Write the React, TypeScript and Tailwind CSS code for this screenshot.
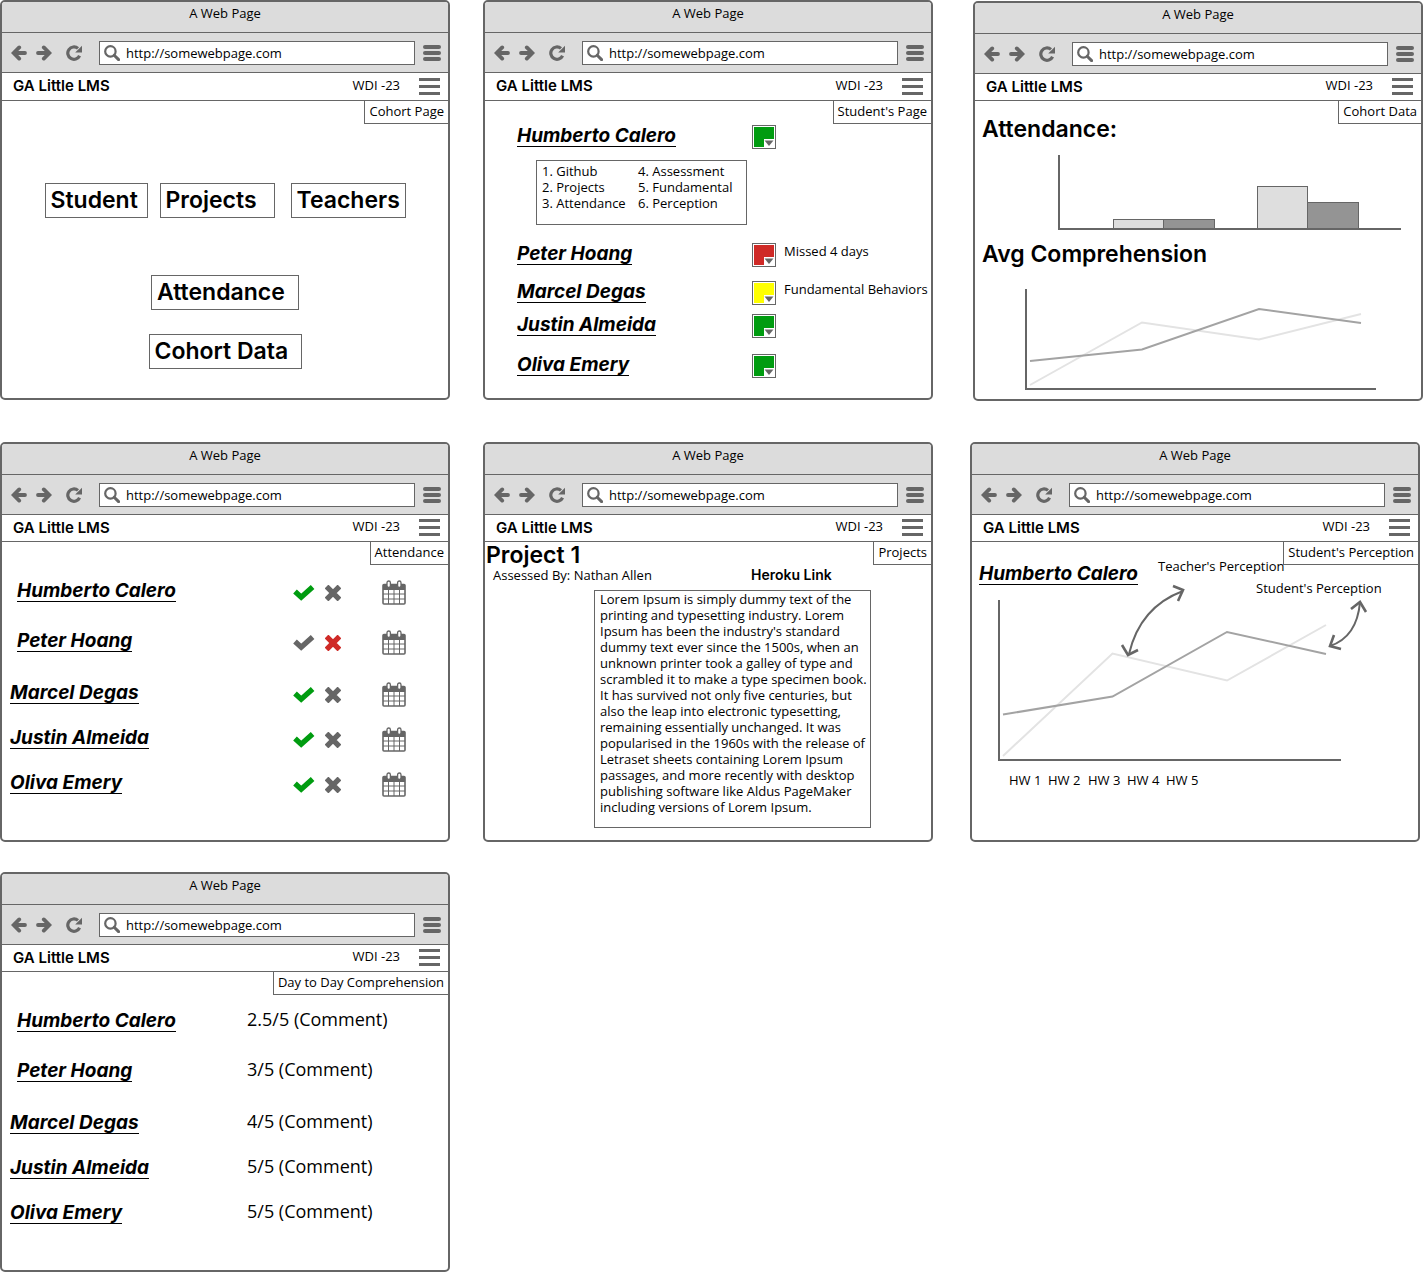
import React from "react";

const LINES = [
  "Lorem Ipsum is simply dummy text of the",
  "printing and typesetting industry. Lorem",
  "Ipsum has been the industry's standard",
  "dummy text ever since the 1500s, when an",
  "unknown printer took a galley of type and",
  "scrambled it to make a type specimen book.",
  "It has survived not only five centuries, but",
  "also the leap into electronic typesetting,",
  "remaining essentially unchanged. It was",
  "popularised in the 1960s with the release of",
  "Letraset sheets containing Lorem Ipsum",
  "passages, and more recently with desktop",
  "publishing software like Aldus PageMaker",
  "including versions of Lorem Ipsum.",
].join("\n");

function ArrowIcon({ className = "" }: { className?: string }) {
  return (
    <svg viewBox="0 0 16 16" className={`size-4 ${className}`} fill="none" stroke="currentColor" strokeWidth="3.8" strokeLinecap="round" aria-hidden="true">
      <path d="M14 8H4M8.200 2.400 2.600 8l5.600 5.600" strokeLinejoin="miter" />
    </svg>
  );
}

function ReloadIcon() {
  return (
    <svg viewBox="0 0 16 16" className="size-4" aria-hidden="true">
      <path d="M13.600 10.800A6.200 6.200 0 1 1 12 3.400" fill="none" stroke="currentColor" strokeWidth="3.200" />
      <path d="M16 0.800v6.800H9.200z" fill="currentColor" />
    </svg>
  );
}

function SearchIcon() {
  return (
    <svg viewBox="0 0 16 16" className="size-4 shrink-0 text-[#666]" fill="none" stroke="currentColor" aria-hidden="true">
      <circle cx="6.4" cy="6.4" r="5.2" strokeWidth="2.2" />
      <path d="m10.2 10.2 4.4 4.4" strokeWidth="3" strokeLinecap="round" />
    </svg>
  );
}

function CheckIcon() {
  return (
    <svg viewBox="0 0 22 16" className="h-4 w-[22px]" fill="none" stroke="currentColor" strokeWidth="5.400" aria-hidden="true">
      <path d="m2 6.600 6.200 5.600L19.600 2" />
    </svg>
  );
}

function CrossIcon() {
  return (
    <svg viewBox="0 0 16 16" className="size-4" fill="none" stroke="currentColor" strokeWidth="5.400" aria-hidden="true">
      <path d="m1.500 1.500 13 13M14.500 1.500l-13 13" />
    </svg>
  );
}

function CalendarIcon() {
  return (
    <svg viewBox="0 0 24 26" className="h-[26px] w-6" fill="none" stroke="currentColor" aria-hidden="true">
      <path d="M1 4.5h22V10H1z" fill="currentColor" stroke="none" />
      <rect x="1" y="4.5" width="22" height="19.5" rx="1" strokeWidth="1.6" />
      <path d="M6.5 10v14M12 10v14M17.500 10v14M1 14h22M1 19h22" strokeWidth="1" />
      <rect x="5" y="1" width="3.400" height="6.500" rx="1.700" fill="white" strokeWidth="1.300" />
      <rect x="15.600" y="1" width="3.400" height="6.500" rx="1.700" fill="white" strokeWidth="1.300" />
    </svg>
  );
}

type BrowserProps = { tag: string; tall?: boolean; className?: string; children: React.ReactNode };

function Browser({ tag, tall = false, className = "", children }: BrowserProps) {
  return (
    <section aria-label={tag} className={`flex min-h-[400px] min-w-0 flex-1 flex-col rounded-[5px] border-2 border-[#666] bg-white ${className}`}>
      <div className="h-[31px] rounded-t-[3px] border-b border-[#666] bg-[#dcdcdc] pt-[3px] text-center leading-4">A Web Page</div>
      <div className="flex h-10 items-center border-b border-[#666] bg-[#dcdcdc] pr-[7px] pl-[9px] text-[#666]">
        <button type="button" aria-label="Back" className="mr-[9px]">
          <ArrowIcon />
        </button>
        <button type="button" aria-label="Forward" className="mr-[14px]">
          <ArrowIcon className="rotate-180" />
        </button>
        <button type="button" aria-label="Reload" className="mr-[17px]">
          <ReloadIcon />
        </button>
        <label className="flex h-6 min-w-0 flex-1 items-center gap-[6px] border border-[#666] bg-white pl-1">
          <SearchIcon />
          <input type="text" aria-label="Address" defaultValue="http://somewebpage.com" className="min-w-0 flex-1 leading-4 text-black outline-none" />
        </label>
        <button type="button" aria-label="Browser menu" className="ml-2 flex w-[18px] flex-col gap-[2px]">
          <span className="h-1 rounded-sm bg-[#666]" />
          <span className="h-1 rounded-sm bg-[#666]" />
          <span className="h-1 rounded-sm bg-[#666]" />
        </button>
      </div>
      <header className={`flex items-center border-b border-[#666] pr-2 pb-px pl-[11px] ${tall ? "h-7" : "h-[27px]"}`}>
        <h1 className="flex-1 font-['Inter',sans-serif] text-[15px] leading-4 font-semibold">GA Little LMS</h1>
        <span className="mr-[19px] pb-[3px] leading-4">WDI -23</span>
        <button type="button" aria-label="Menu" className="flex w-[21px] flex-col gap-1">
          <span className="h-[3px] bg-[#666]" />
          <span className="h-[3px] bg-[#666]" />
          <span className="h-[3px] bg-[#666]" />
        </button>
      </header>
      <div className="relative flex-1">
        <div className="absolute top-0 right-0 h-[23px] border-b border-l border-[#666] bg-white px-1 pt-[2px] leading-4">{tag}</div>
        {children}
      </div>
    </section>
  );
}

function Name({ children }: { children: string }) {
  return (
    <a href="#student" className="block w-fit border-b border-black pt-px font-['Inter',sans-serif] text-[19px] leading-5 font-bold whitespace-nowrap italic">
      {children}
    </a>
  );
}

function BoxButton({ className, children }: { className: string; children: string }) {
  return (
    <button type="button" className={`h-[35px] border border-[#666] pb-[2px] pl-[5px] text-left font-['Inter',sans-serif] text-[23px] leading-7 font-semibold whitespace-nowrap ${className}`}>
      {children}
    </button>
  );
}

function Heading({ className, children }: { className: string; children: string }) {
  return <h2 className={`font-['Inter',sans-serif] text-[23px] font-semibold ${className}`}>{children}</h2>;
}

function StatusRow({ name, color, note, className }: { name: string; color: string; note?: string; className: string }) {
  return (
    <div className={`flex h-6 items-start pl-8 ${className}`}>
      <div className="w-[235px]">
        <Name>{name}</Name>
      </div>
      <button type="button" aria-label={`Status of ${name}`} className="size-6 border border-[#666] bg-white p-px">
        <span className={`flex size-5 items-end justify-end ${color}`}>
          <svg viewBox="0 0 10 8" className="h-2 w-[10px] bg-white" aria-hidden="true">
            <path d="M0.500 1.500h9L5 7z" fill="#666" />
          </svg>
        </span>
      </button>
      {note && <span className="ml-2 leading-4 whitespace-nowrap">{note}</span>}
    </div>
  );
}

const STUDENTS = [
  { name: "Humberto Calero", score: "2.5/5", row: "pl-[15px]", present: true },
  { name: "Peter Hoang", score: "3/5", row: "mt-[23px] pl-[15px]", present: false },
  { name: "Marcel Degas", score: "4/5", row: "mt-[25px] pl-2", present: true },
  { name: "Justin Almeida", score: "5/5", row: "mt-[18px] pl-2", present: true },
  { name: "Oliva Emery", score: "5/5", row: "mt-[18px] pl-2", present: true },
];

export default function App() {
  return (
    <main className="bg-white font-['Open_Sans',sans-serif] text-[13px] text-black">
      <div className="flex pr-px">
        <Browser tag="Cohort Page" tall className="mb-px">
          <div className="flex justify-center pt-[82px]">
            <BoxButton className="mr-3 w-[103px]">Student</BoxButton>
            <BoxButton className="mr-4 w-[115px]">Projects</BoxButton>
            <BoxButton className="w-[115px]">Teachers</BoxButton>
          </div>
          <div className="mt-[57px] flex flex-col items-center gap-6">
            <BoxButton className="w-[148px]">Attendance</BoxButton>
            <BoxButton className="w-[153px]">Cohort Data</BoxButton>
          </div>
        </Browser>

        <Browser tag="Student's Page" tall className="mb-px ml-[33px]">
          <StatusRow name="Humberto Calero" color="bg-[#009c10]" className="mt-6" />
          <ol className="mt-[11px] ml-[51px] grid h-[65px] w-[211px] grid-flow-col grid-cols-[96px_1fr] grid-rows-[16px_16px_16px] border border-[#666] pt-[2px] pl-[5px] leading-4">
            <li>1. Github</li>
            <li>2. Projects</li>
            <li>3. Attendance</li>
            <li>4. Assessment</li>
            <li>5. Fundamental</li>
            <li>6. Perception</li>
          </ol>
          <StatusRow name="Peter Hoang" color="bg-[#cf2a27]" note="Missed 4 days" className="mt-[18px]" />
          <StatusRow name="Marcel Degas" color="bg-[#ffff00]" note="Fundamental Behaviors" className="mt-[14px]" />
          <StatusRow name="Justin Almeida" color="bg-[#009c10]" className="mt-[9px]" />
          <StatusRow name="Oliva Emery" color="bg-[#009c10]" className="mt-4" />
        </Browser>

        <Browser tag="Cohort Data" className="mt-px ml-10">
          <Heading className="pt-[14px] pl-[7px] leading-7">Attendance:</Heading>
          <svg viewBox="0 0 344 76" className="mt-3 ml-[83px] h-[76px] w-[344px]" stroke="#666" role="img" aria-label="Attendance chart">
            <rect x="55.500" y="64.500" width="50" height="9.500" fill="#dedede" />
            <rect x="105.500" y="64.500" width="51" height="9.500" fill="#949494" />
            <rect x="199.500" y="31.500" width="50" height="42.500" fill="#dedede" />
            <rect x="249.500" y="47.500" width="51" height="26.500" fill="#949494" />
            <path d="M1 0v74h342" fill="none" strokeWidth="2" />
          </svg>
          <Heading className="mt-[9px] pl-[7px] leading-7">Avg Comprehension</Heading>
          <svg viewBox="0 0 352 102" className="mt-[21px] ml-[50px] h-[102px] w-[352px]" fill="none" strokeWidth="2" role="img" aria-label="Average comprehension chart">
            <path d="M5 96 117 33.500 234 50.500 336 25" stroke="#e3e3e3" />
            <path d="M5 72 117 60.500 234 20 336 34" stroke="#a3a3a3" />
            <path d="M1 0v100h350" stroke="#666" />
          </svg>
        </Browser>
      </div>

      <div className="mt-[41px] flex pr-1">
        <Browser tag="Attendance">
          <ul className="pt-[37px]">
            {STUDENTS.map((s) => (
              <li key={s.name} className={`flex h-[27px] items-center ${s.row}`}>
                <div className="min-w-0 flex-1 pb-[3px]">
                  <Name>{s.name}</Name>
                </div>
                <button type="button" aria-label={`${s.name} present`} className={`mr-[10px] ${s.present ? "text-[#009c10]" : "text-[#666]"}`}>
                  <CheckIcon />
                </button>
                <button type="button" aria-label={`${s.name} absent`} className={`mr-[41px] ${s.present ? "text-[#666]" : "text-[#cf2a27]"}`}>
                  <CrossIcon />
                </button>
                <button type="button" aria-label={`${s.name} calendar`} className="mr-[42px] text-[#666]">
                  <CalendarIcon />
                </button>
              </li>
            ))}
          </ul>
        </Browser>

        <Browser tag="Projects" className="ml-[33px]">
          <Heading className="px-px pt-px leading-6">Project 1</Heading>
          <div className="flex items-start pl-2">
            <p className="w-[258px] leading-4">Assessed By: Nathan Allen</p>
            <a href="#heroku" className="font-['Inter',sans-serif] text-[14px] leading-4 font-semibold">
              Heroku Link
            </a>
          </div>
          <p className="mt-[7px] ml-[109px] h-[238px] w-[277px] border border-[#666] pl-[5px] leading-4 whitespace-pre">{LINES}</p>
        </Browser>

        <Browser tag="Student's Perception" className="ml-[37px]">
          <div className="flex items-start pt-4 pl-[7px]">
            <div className="mt-[5px] w-[179px]">
              <Name>Humberto Calero</Name>
            </div>
            <span className="leading-4">Teacher's Perception</span>
          </div>
          <div className="relative ml-[26px]">
            <span className="absolute -top-[5px] left-[258px] leading-4 whitespace-nowrap">Student's Perception</span>
            <svg viewBox="998 585 385 177" className="h-[177px] w-[385px] overflow-visible" fill="none" strokeWidth="2" role="img" aria-label="Perception chart">
              <path d="M1003 756 1112.500 653.500 1227 680.500 1326 625" stroke="#e3e3e3" />
              <path d="M1003 714.500 1112.500 696.500 1227 632 1326 654" stroke="#a3a3a3" />
              <path d="M999 600v160h342" stroke="#666" />
              <path d="M1183 591Q1140 607 1129 654" stroke="#666" />
              <path d="M1360 602Q1357 637 1330 646" stroke="#666" />
              <path d="M1173 586l10 4-5 11M1122 645l6 10 10-5M1351 609l9-7 6 10M1334 635l-4 11 11 3" stroke="#666" strokeWidth="2.600" />
            </svg>
          </div>
          <div className="mt-[10px] ml-[37px] grid grid-cols-[39px_40px_39px_39px_39px] leading-4">
            <span>HW 1</span>
            <span>HW 2</span>
            <span>HW 3</span>
            <span>HW 4</span>
            <span>HW 5</span>
          </div>
        </Browser>
      </div>

      <div className="mt-[30px] grid grid-cols-3 gap-[33px] pr-2">
        <Browser tag="Day to Day Comprehension">
          <ul className="pt-[37px]">
            {STUDENTS.map((s) => (
              <li key={s.name} className={`flex h-[27px] items-start ${s.row}`}>
                <div className="min-w-0 flex-1 pt-px">
                  <Name>{s.name}</Name>
                </div>
                <span className="w-[201px] text-[18px] leading-5">{s.score} (Comment)</span>
              </li>
            ))}
          </ul>
        </Browser>
      </div>
    </main>
  );
}
